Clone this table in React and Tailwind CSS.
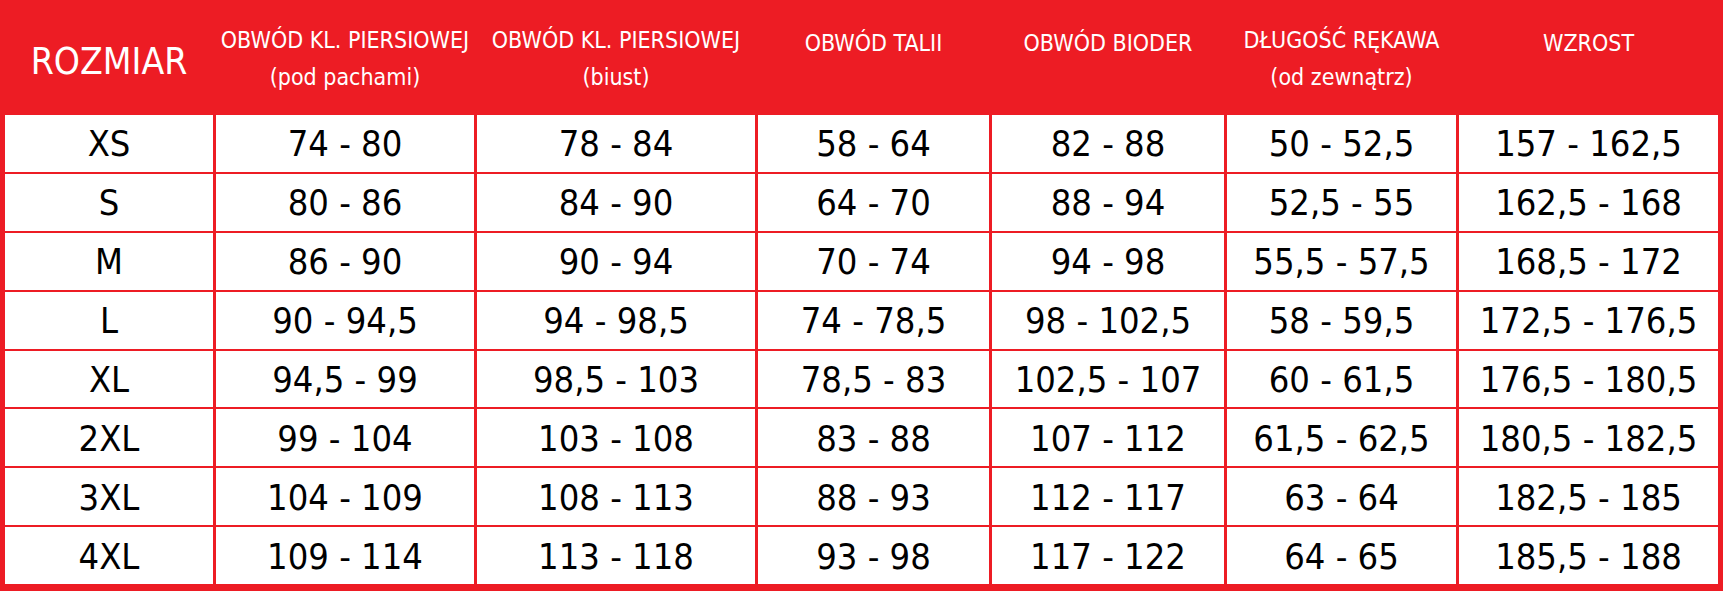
const headers = [
  { lines: ['ROZMIAR'], big: true },
  { lines: ['OBWÓD KL. PIERSIOWEJ', '(pod pachami)'] },
  { lines: ['OBWÓD KL. PIERSIOWEJ', '(biust)'] },
  { lines: ['OBWÓD TALII'] },
  { lines: ['OBWÓD BIODER'] },
  { lines: ['DŁUGOŚĆ RĘKAWA', '(od zewnątrz)'] },
  { lines: ['WZROST'] },
];

const rows = [
  ['XS', '74 - 80', '78 - 84', '58 - 64', '82 - 88', '50 - 52,5', '157 - 162,5'],
  ['S', '80 - 86', '84 - 90', '64 - 70', '88 - 94', '52,5 - 55', '162,5 - 168'],
  ['M', '86 - 90', '90 - 94', '70 - 74', '94 - 98', '55,5 - 57,5', '168,5 - 172'],
  ['L', '90 - 94,5', '94 - 98,5', '74 - 78,5', '98 - 102,5', '58 - 59,5', '172,5 - 176,5'],
  ['XL', '94,5 - 99', '98,5 - 103', '78,5 - 83', '102,5 - 107', '60 - 61,5', '176,5 - 180,5'],
  ['2XL', '99 - 104', '103 - 108', '83 - 88', '107 - 112', '61,5 - 62,5', '180,5 - 182,5'],
  ['3XL', '104 - 109', '108 - 113', '88 - 93', '112 - 117', '63 - 64', '182,5 - 185'],
  ['4XL', '109 - 114', '113 - 118', '93 - 98', '117 - 122', '64 - 65', '185,5 - 188'],
];

export default function App() {
  return (
    <div className="w-[1723px] h-[591px] bg-[#ed1c24] pl-[5px] pr-[5px] pb-[7px] font-['DejaVu_Sans_Condensed','DejaVu_Sans',sans-serif] [font-stretch:condensed]">
      <div className="grid h-full grid-cols-[208px_258px_278px_231px_232px_229px_259px] grid-rows-[113px_repeat(8,minmax(0,1fr))] gap-x-[3px] gap-y-[2px]">
        {/* Header */}
        {headers.map((h, i) =>
          h.big ? (
            <div key={i} className="flex items-center justify-center pt-[10px] text-white text-[37px] leading-none">
              {h.lines[0]}
            </div>
          ) : (
            <div
              key={i}
              className={`flex flex-col items-center text-white text-[23px] leading-[37px] ${
                h.lines.length === 1 ? 'pt-[25px]' : 'pt-[22px]'
              }`}
            >
              {h.lines.map((l) => (
                <span key={l} className="whitespace-nowrap">{l}</span>
              ))}
            </div>
          )
        )}

        {/* Body */}
        {rows.map((r) =>
          r.map((c, j) => (
            <div
              key={r[0] + j}
              className="flex items-center justify-center pt-[2px] bg-white text-black text-[36px] leading-none whitespace-nowrap"
            >
              {c}
            </div>
          ))
        )}
      </div>
    </div>
  );
}
